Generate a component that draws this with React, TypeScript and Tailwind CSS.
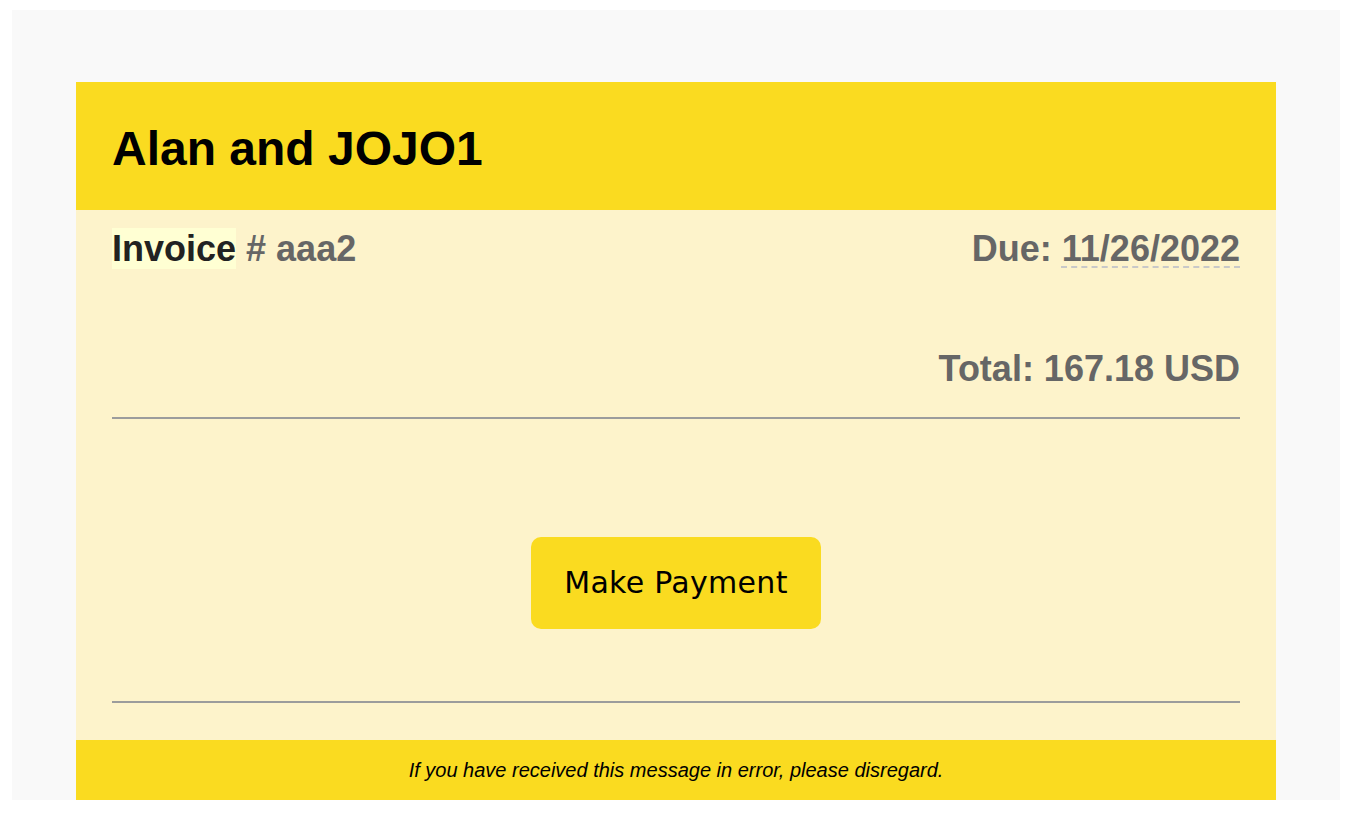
export default function App() {
  return (
    <div className="min-h-screen bg-white pt-[10px] pl-[12px] pr-[6px] pb-[24px] font-['Liberation_Sans',Arial,sans-serif]">
      <div className="bg-[#f9f9f9] px-[64px] pt-[72px]">
        <div className="w-[1200px]">
          <header className="h-[128px] bg-[#fadb20] px-[36px] pt-[5px] flex items-center">
            <h1 className="text-[48px] font-bold text-black leading-[55px]">Alan and JOJO1</h1>
          </header>

          <main className="bg-[#fdf3cb] px-[36px] pt-[18px] pb-[37px]">
            <div className="flex items-start justify-between text-[36px] font-bold leading-[42px]">
              <div>
                <span className="bg-[#ffffd3] text-[#222]">Invoice</span>{" "}
                <span className="text-[#666]"># aaa2</span>
              </div>
              <div className="text-[#666]">
                Due:{" "}
                <span className="underline decoration-dashed decoration-[#c8c8c8] decoration-[1.5px] underline-offset-[5px]">
                  11/26/2022
                </span>
              </div>
            </div>

            <div className="mt-[78px] text-right text-[36px] font-bold leading-[42px] text-[#666]">
              Total: 167.18 USD
            </div>

            <hr className="mt-[27px] border-0 border-t-2 border-[#9c9c9c]" />

            <div className="flex justify-center pt-[118px] pb-[72px]">
              <button className="h-[92px] w-[290px] rounded-[10px] bg-[#fadb20] text-[30px] leading-[36px] tracking-[0.3px] text-black font-['DejaVu_Sans',Verdana,sans-serif]">
                Make Payment
              </button>
            </div>

            <hr className="border-0 border-t-2 border-[#9c9c9c]" />
          </main>

          <footer className="h-[60px] bg-[#fadb20] flex items-center justify-center">
            <p className="text-[20px] italic text-black">
              If you have received this message in error, please disregard.
            </p>
          </footer>
        </div>
      </div>
    </div>
  );
}
